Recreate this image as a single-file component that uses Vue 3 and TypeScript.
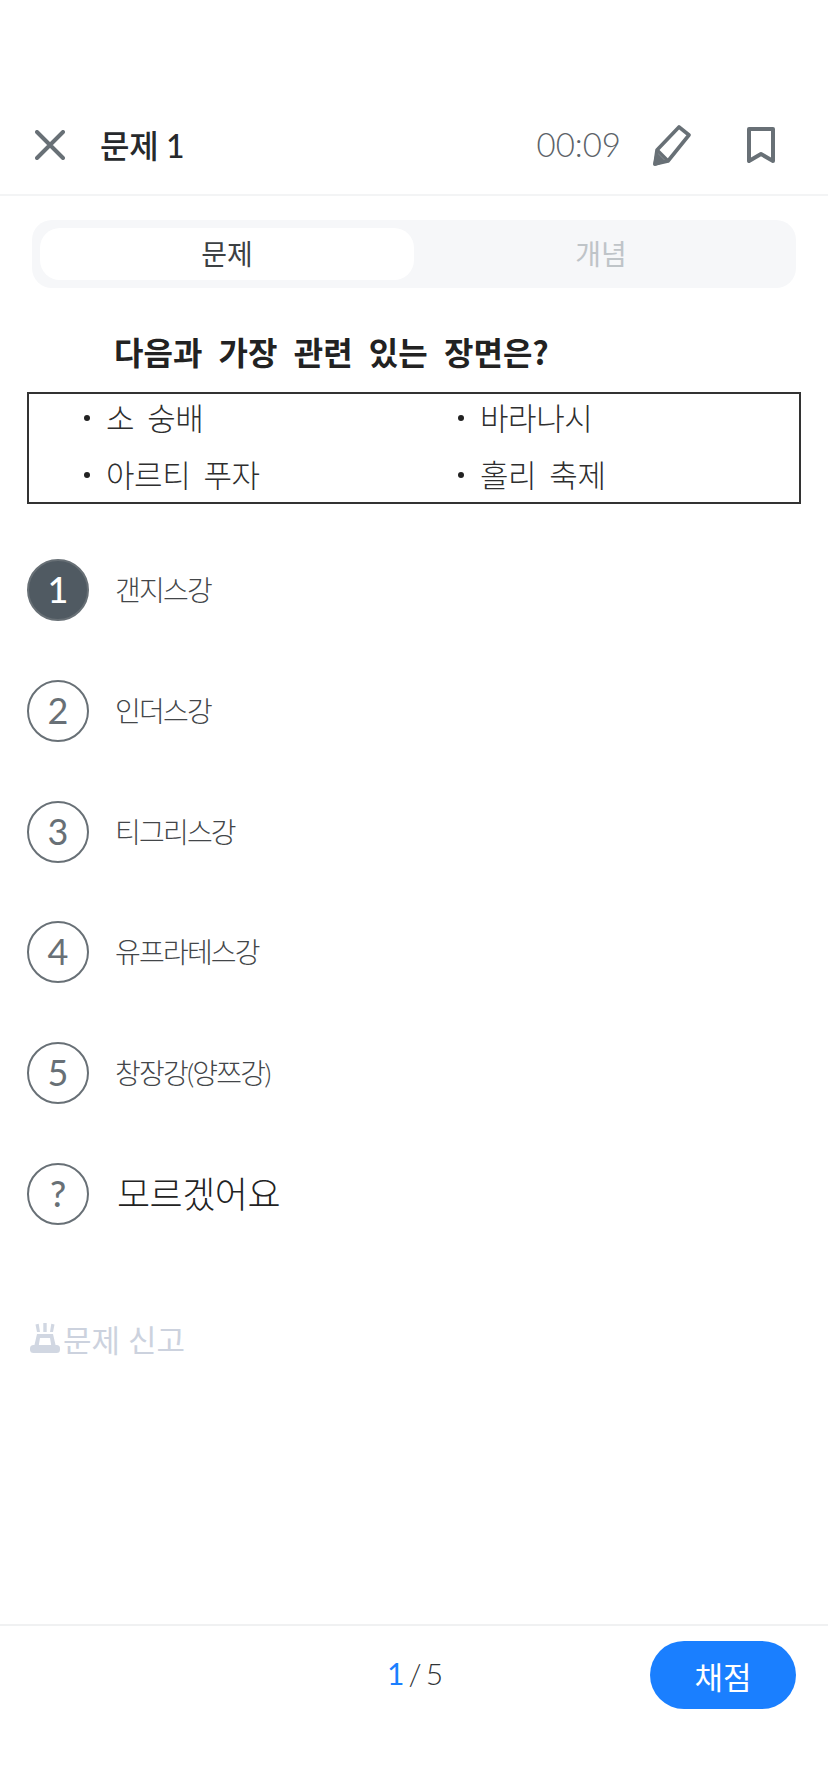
<script setup lang="ts">
const options: { mark: string; text: string; big?: boolean; on?: boolean; strong?: boolean }[] = [
  { mark: '1', text: '갠지스강', on: true, strong: true },
  { mark: '2', text: '인더스강' },
  { mark: '3', text: '티그리스강' },
  { mark: '4', text: '유프라테스강' },
  { mark: '5', text: '창장강(양쯔강)' },
  { mark: '?', text: '모르겠어요', big: true, strong: true },
]
const items = ['소 숭배', '바라나시', '아르티 푸자', '홀리 축제']
</script>

<template>
  <div class="page">
    <header class="top">
      <svg class="close" width="30" height="30" viewBox="0 0 30 30" fill="none" stroke="#687076" stroke-width="4" stroke-linecap="round"><path d="M2 2l26 26M28 2L2 28" /></svg>
      <h1 class="title">문제 1</h1>
      <span class="time">00:09</span>
      <svg class="pencil" width="42" height="42" viewBox="0 0 42 42" fill="none" stroke="#687076" stroke-width="3.6" stroke-linejoin="round"><path d="M29 3l10 8-21 26-13 3 2-14z" /><path d="M7 26l11 11" /><path d="M5 40l2-9 6 6z" fill="#687076" /></svg>
      <svg class="mark" width="30" height="36" viewBox="0 0 30 36" fill="none" stroke="#687076" stroke-width="4" stroke-linejoin="round"><path d="M3 2h24v32l-12-7-12 7z" /></svg>
    </header>

    <nav class="tabs">
      <div class="tab active">문제</div>
      <div class="tab">개념</div>
    </nav>

    <section class="question">
      <p class="ask">다음과 가장 관련 있는 장면은?</p>
      <div class="box">
        <div v-for="item in items" :key="item" class="item"><i class="dot"></i>{{ item }}</div>
      </div>
    </section>

    <ul class="options">
      <li v-for="o in options" :key="o.mark" class="option">
        <span class="circle" :class="{ on: o.on, strong: o.strong }">{{ o.mark }}</span>
        <span class="label" :class="{ big: o.big }">{{ o.text }}</span>
      </li>
    </ul>

    <div class="report">
      <svg width="32" height="32" viewBox="0 0 32 32" fill="#d1d7e2"><rect x="1" y="23" width="30" height="8" rx="3.500" /><path d="M5 25l3-13h16l3 13h-4.500l-1.500-9h-10l-1.500 9z" /><path d="M6.500 2.500l3.200-.8 1.300 8.300h-3zM14.300 1h3.400v9h-3.400zM22.300 1.700l3.200.8L24 10h-3z" /></svg>
      <span>문제 신고</span>
    </div>

    <footer class="bottom">
      <div class="count"><b>1</b> / 5</div>
      <button class="grade">채점</button>
    </footer>
  </div>
</template>

<style>
html, body { margin: 0; background: #fff; }
</style>

<style scoped>
.page {
  position: relative;
  width: 828px;
  height: 1792px;
  background: #fff;
  font-family: Lato, "Noto Sans CJK KR", sans-serif;
  box-sizing: border-box;
  padding-top: 112px;
  display: flex;
  flex-direction: column;
}
.top {
  display: flex;
  align-items: center;
  height: 84px;
  padding: 0 0 16px 35px;
  box-sizing: border-box;
  border-bottom: 2px solid #f3f4f5;
}
.close { flex: none; }
.title { margin: 0 0 2px 35px; font-size: 32px; font-weight: 500; color: #26292c; letter-spacing: -0.3px; flex: 1; }
.time { font-size: 33px; font-weight: 300; color: #5c6369; margin: 0 -3px 2px 0; }
.pencil { margin-left: 32px; }
.mark { margin: 0 52px 0 54px; }
.tabs {
  margin: 24px 32px 0;
  height: 68px;
  padding: 8px;
  box-sizing: border-box;
  border-radius: 20px;
  background: #f6f7f9;
  display: flex;
}
.tab {
  width: 375px;
  padding-bottom: 3px;
  box-sizing: border-box;
  border-radius: 20px;
  display: flex;
  align-items: center;
  justify-content: center;
  font-size: 28px;
  color: #bfc4c8;
}
.tab.active { background: #fff; color: #3c4043; }
.question { padding: 0 27px; }
.ask {
  margin: 39px 0 0 87px;
  font-family: "Noto Sans CJK KR", sans-serif;
  font-size: 32px;
  line-height: 48px;
  font-weight: 700;
  color: #222;
  word-spacing: 9px;
}
.box {
  margin-top: 17px;
  width: 774px;
  height: 112px;
  box-sizing: border-box;
  border: 2px solid #333;
  display: grid;
  grid-template-columns: 374px 1fr;
  grid-template-rows: 1fr 1fr;
  padding-left: 55px;
}
.item {
  display: flex;
  align-items: center;
  padding-bottom: 12px;
  font-size: 31px;
  letter-spacing: -0.4px;
  color: #2e2e2e;
  word-spacing: 5px;
  font-weight: 300;
  white-space: pre;
}
.dot { width: 6px; height: 6px; border-radius: 50%; background: #222; margin: 3px 16px 0 0; }
.options { list-style: none; margin: 55px 0 0; padding: 0 27px; display: flex; flex-direction: column; gap: 58.8px; }
.option { display: flex; align-items: center; height: 62px; }
.circle {
  flex: none;
  width: 62px;
  height: 62px;
  box-sizing: border-box;
  padding-bottom: 2px;
  border: 2px solid #687076;
  border-radius: 50%;
  display: flex;
  align-items: center;
  justify-content: center;
  font-size: 36px;
  color: #687076;
}
.circle.strong { font-weight: 500; }
.circle.on { background: #505a62; color: #fff; }
.label { margin-left: 26px; font-size: 28px; color: #434649; letter-spacing: -1.8px; font-weight: 300; margin-top: -2px; }
.label.big { margin-left: 28px; font-size: 36px; color: #222; letter-spacing: -0.5px; margin-top: -4px; }
.report {
  margin: 91px 0 0 29px;
  display: flex;
  align-items: center;
  gap: 2px;
  font-size: 31px;
  color: #ccd2de;
}
.bottom {
  position: absolute;
  left: 0;
  right: 0;
  top: 1624px;
  height: 86px;
  border-top: 2px solid #f0f1f2;
  display: flex;
  align-items: center;
  padding: 14px 32px 0 0;
  box-sizing: border-box;
}
.count { position: absolute; left: 387px; top: 29px; font-size: 30px; font-weight: 300; color: #303336; white-space: pre; word-spacing: -4px; }
.count b { font-weight: 400; color: #1a7fff; }
.grade {
  margin-left: auto;
  width: 146px;
  height: 68px;
  border: 0;
  border-radius: 34px;
  background: #1a7fff;
  color: #fff;
  font-family: inherit;
  font-size: 31px;
  font-weight: 400;
}
</style>
